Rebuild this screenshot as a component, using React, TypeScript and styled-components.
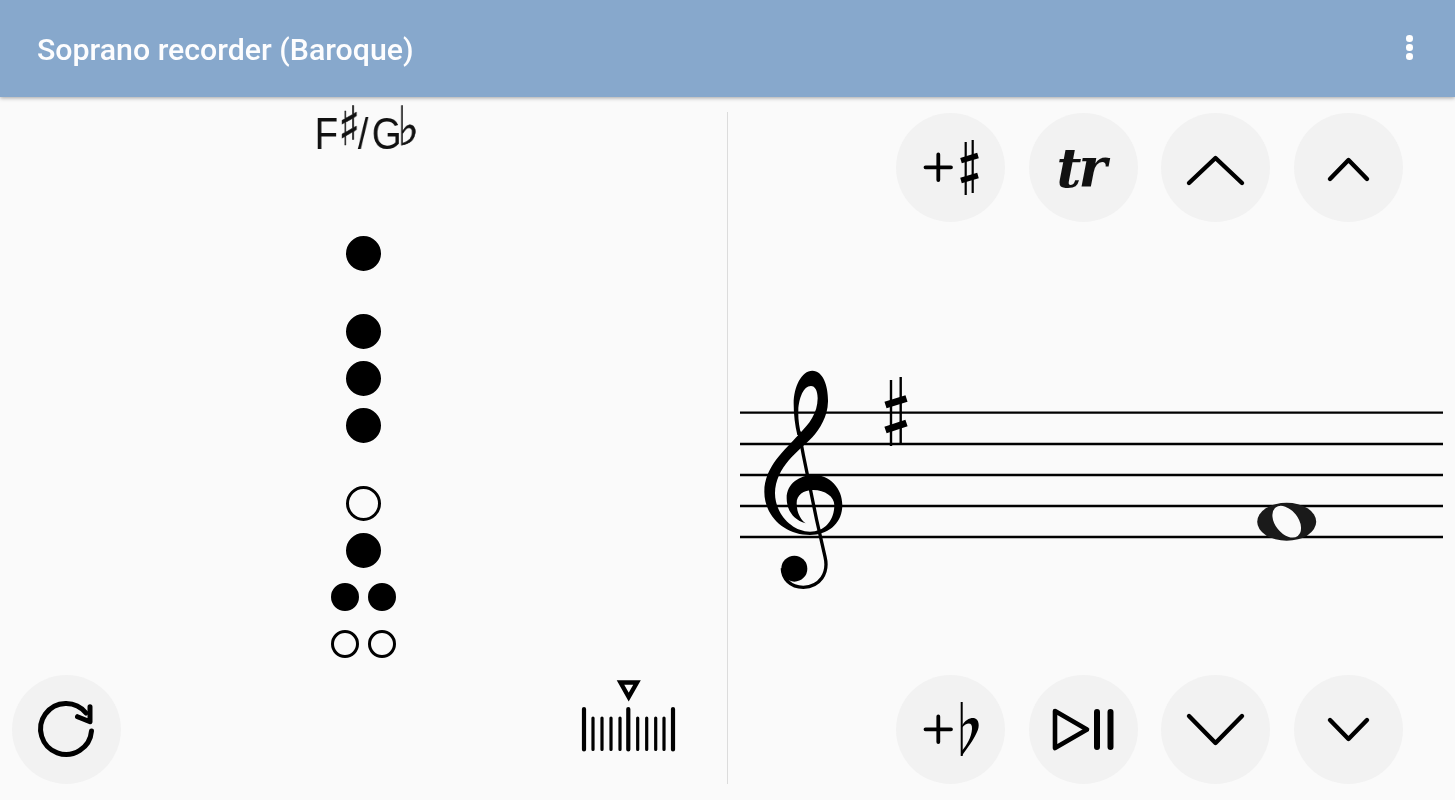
import styled, { createGlobalStyle } from 'styled-components';

const GlobalStyle = createGlobalStyle`
  html, body {
    margin: 0;
    padding: 0;
    background: #fafafa;
    overflow: hidden;
  }
`;

const Page = styled.div`
  width: 1455px;
  height: 800px;
  background: #fafafa;
`;

const Header = styled.header`
  position: relative;
  z-index: 1;
  height: 97px;
  display: flex;
  align-items: center;
  justify-content: space-between;
  padding: 2px 37px 0;
  box-sizing: border-box;
  background: #87a8cc;
  box-shadow: 0 1px 4px rgba(0, 0, 0, 0.35);
`;

const Title = styled.h1`
  margin: 0;
  font-family: Roboto, 'Liberation Sans', sans-serif;
  font-size: 30.3px;
  font-weight: 500;
  color: #fdfdfe;
`;

const MenuDots = styled.div`
  display: flex;
  flex-direction: column;
  gap: 2.4px;
  margin: -4px -4px 0 0;
  padding-right: 9px;
`;

const MenuDot = styled.span`
  width: 6.6px;
  height: 6.6px;
  border-radius: 50%;
  background: #fff;
`;

const Main = styled.main`
  height: 703px;
  box-sizing: border-box;
  padding: 15px 0 16px;
  display: grid;
  grid-template-columns: 727px 1px 1fr;
`;

const LeftPanel = styled.section`
  display: flex;
  flex-direction: column;
  align-items: center;
`;

const Divider = styled.div`
  background: #dcdcdc;
`;

const RightPanel = styled.section`
  display: flex;
  flex-direction: column;
  padding-top: 1px;
`;

const NoteName = styled.div`
  height: 52px;
  display: flex;
  align-items: flex-start;
  justify-content: center;
  margin-top: -4px;
  padding-bottom: 4px;
  font-family: 'Liberation Sans', Arial, sans-serif;
  font-size: 45px;
  line-height: 52px;
  color: #111;
  transform: scaleX(0.85);
  will-change: transform;
`;

const Accidental = styled.span`
  display: block;
  margin: -12px 1px 0 0;
  font-family: 'DejaVu Sans', sans-serif;
  font-size: 54px;
  line-height: 62px;
  letter-spacing: -8px;
  color: #111;
  -webkit-text-stroke: 0.5px #111;
`;

const Slash = styled.span`
  display: block;
  margin: 0 4px;
`;

const TightLetter = styled.span`
  display: block;
  letter-spacing: -5px;
`;

const Holes = styled.div`
  margin-top: 71.5px;
  display: flex;
  flex-direction: column;
  gap: 43px;
`;

const HoleGroup = styled.div`
  display: flex;
  flex-direction: column;
  align-items: center;
  gap: 12px;
`;

const HolePair = styled.div`
  height: 34.7px;
  display: flex;
  align-items: center;
  gap: 9px;
`;

const Hole = styled.span<{ $open?: boolean; $small?: boolean }>`
  display: block;
  box-sizing: border-box;
  width: ${(p) => (p.$small ? 28 : 35)}px;
  height: ${(p) => (p.$small ? 28 : 35)}px;
  border-radius: 50%;
  border: 3px solid #000;
  background: ${(p) => (p.$open ? 'transparent' : '#000')};
`;

const LeftFooter = styled.div`
  align-self: stretch;
  margin-top: auto;
  display: flex;
  align-items: flex-end;
  justify-content: space-between;
  padding: 0 50px 0 12px;
`;

const Tuner = styled.svg`
  display: block;
  margin-bottom: 32px;
`;

const ButtonRow = styled.div`
  display: flex;
  justify-content: flex-end;
  gap: 23.67px;
  padding-right: 52px;
`;

const RoundButton = styled.button`
  width: 109px;
  height: 109px;
  padding: 0;
  border: 0;
  border-radius: 50%;
  background: #f2f2f2;
  display: flex;
  align-items: center;
  justify-content: center;
  color: #000;
`;

const TrillText = styled.span`
  margin-left: -6px;
  font-family: 'DejaVu Serif', serif;
  font-size: 54px;
  font-weight: 700;
  font-style: italic;
  line-height: 1;
  color: #111;
  letter-spacing: -3px;
`;

const Staff = styled.svg`
  display: block;
  margin-top: 138px;
  margin-bottom: auto;
`;

const Icon = ({ children }: { children: React.ReactNode }) => (
  <svg width="109" height="109" viewBox="0 0 109 109" fill="none" stroke="#000" strokeWidth="4.4" strokeLinecap="round" strokeLinejoin="round">
    {children}
  </svg>
);

const Plus = () => <path d="M29.500 54.300H55M42.300 41.500V67" strokeWidth="3.800" />;

const ChevronIcon = ({ d }: { d: string }) => (
  <Icon>
    <path d={d} />
  </Icon>
);

const Clef = () => (
  <g transform="translate(735 360) scale(0.3333)">
    <path
      fill="#000"
      fillRule="nonzero"
      d="M212 490 C175 480 155 450 155 415 C155 370 195 345 235 345 C285 345 322 385 322 435 C322 490 280 525 225 525 C150 525 88 470 88 395 C88 320 150 270 190 225 C225 190 247 160 248 115 C248 92 240 78 228 78 C205 78 192 115 190 150 C189 175 192 200 199 225 L187 225 C180 195 176 165 176 130 C176 80 200 32 232 32 C265 32 280 80 279 125 C278 170 255 205 232 232 C190 275 122 320 120 400 C120 460 170 515 225 515 C270 515 298 480 298 435 C298 410 270 390 235 390 C205 390 185 405 185 430 C185 455 195 478 212 490 Z"
    />
    <path
      fill="none"
      stroke="#000"
      strokeWidth="10"
      d="M192 215 L205 285 L245 480 L270 590 C282 640 255 680 205 682 C165 682 142 655 142 625"
    />
    <circle cx="178" cy="626" r="39" fill="#000" />
  </g>
);

export default function App() {
  return (
    <Page>
      <GlobalStyle />
      <Header>
        <Title>Soprano recorder (Baroque)</Title>
        <MenuDots>
          <MenuDot />
          <MenuDot />
          <MenuDot />
        </MenuDots>
      </Header>
      <Main>
        <LeftPanel>
          <NoteName>
            F<Accidental>♯</Accidental>
            <Slash>/</Slash>
            <TightLetter>G</TightLetter>
            <Accidental>♭</Accidental>
          </NoteName>
          <Holes>
            <HoleGroup>
              <Hole />
            </HoleGroup>
            <HoleGroup>
              <Hole />
              <Hole />
              <Hole />
            </HoleGroup>
            <HoleGroup>
              <Hole $open />
              <Hole />
              <HolePair>
                <Hole $small />
                <Hole $small />
              </HolePair>
              <HolePair>
                <Hole $small $open />
                <Hole $small $open />
              </HolePair>
            </HoleGroup>
          </Holes>
          <LeftFooter>
            <RoundButton>
              <Icon>
                <path d="M79.500 56A25.500 25.500 0 1 1 74 38" strokeWidth="5" />
                <path d="M65.500 41.700L78 46.700V31.700" strokeWidth="5" />
              </Icon>
            </RoundButton>
            <Tuner width="96" height="74" viewBox="581 678 96 74" fill="none" stroke="#000">
              <path d="M620.500 682.500H637L628.700 697Z" strokeWidth="4.400" strokeLinejoin="miter" />
              <g strokeLinecap="round">
                <path d="M584 709V749.500M628.300 709V749.500M673 709V749.500" strokeWidth="4.200" />
                <path d="M593 718V749.500M602 718V749.500M611 718V749.500M620 718V749.500M637.700 718V749.500M646.700 718V749.500M655.700 718V749.500M664 718V749.500" strokeWidth="3.200" />
              </g>
            </Tuner>
          </LeftFooter>
        </LeftPanel>
        <Divider />
        <RightPanel>
          <ButtonRow>
            <RoundButton>
              <Icon>
                <Plus />
                <path d="M69.700 29V82M76.700 27V80" strokeWidth="2.200" strokeLinecap="butt" />
                <path d="M65 47.700L82 42.500M65 67.500L82 62.500" strokeWidth="5.500" strokeLinecap="butt" />
              </Icon>
            </RoundButton>
            <RoundButton>
              <TrillText>tr</TrillText>
            </RoundButton>
            <RoundButton>
              <ChevronIcon d="M28 70L54.500 45L81 70" />
            </RoundButton>
            <RoundButton>
              <ChevronIcon d="M36 66L54.500 47L73 66" />
            </RoundButton>
          </ButtonRow>
          <Staff width="727" height="240" viewBox="728 360 727 240">
            <path d="M740 412.700H1443M740 444H1443M740 475H1443M740 506H1443M740 537H1443" stroke="#000" strokeWidth="2.300" />
            <Clef />
            <path d="M891 380V446M900.700 377V443" stroke="#000" strokeWidth="2.400" />
            <path d="M885.500 405L906.500 398.500M885.500 430L906.500 423" stroke="#000" strokeWidth="7" />
            <ellipse cx="1286.700" cy="521.700" rx="29.500" ry="19" fill="#1a1a1a" />
            <ellipse cx="1286.700" cy="521.700" rx="18" ry="11.500" fill="#fafafa" transform="rotate(52 1286.700 521.700)" />
          </Staff>
          <ButtonRow>
            <RoundButton>
              <Icon>
                <Plus />
                <path d="M65.700 27V81" strokeWidth="2" strokeLinecap="butt" />
                <path
                  d="M65.700 51C69 45 74 42.500 78 43C83 44 84 51 81 57C77 66 72 72 65.700 81V76C71 70 75.500 62 76 54C76.500 47 71 47 65.700 53Z"
                  fill="#000"
                  stroke="none"
                />
              </Icon>
            </RoundButton>
            <RoundButton>
              <Icon>
                <path d="M26 36L58 54.500L26 73Z" strokeWidth="4.600" />
                <path d="M68 37V72M81.500 37V72" strokeWidth="6" />
              </Icon>
            </RoundButton>
            <RoundButton>
              <ChevronIcon d="M28 41L54.500 68L81 41" />
            </RoundButton>
            <RoundButton>
              <ChevronIcon d="M36 45L54.500 64L73 45" />
            </RoundButton>
          </ButtonRow>
        </RightPanel>
      </Main>
    </Page>
  );
}
